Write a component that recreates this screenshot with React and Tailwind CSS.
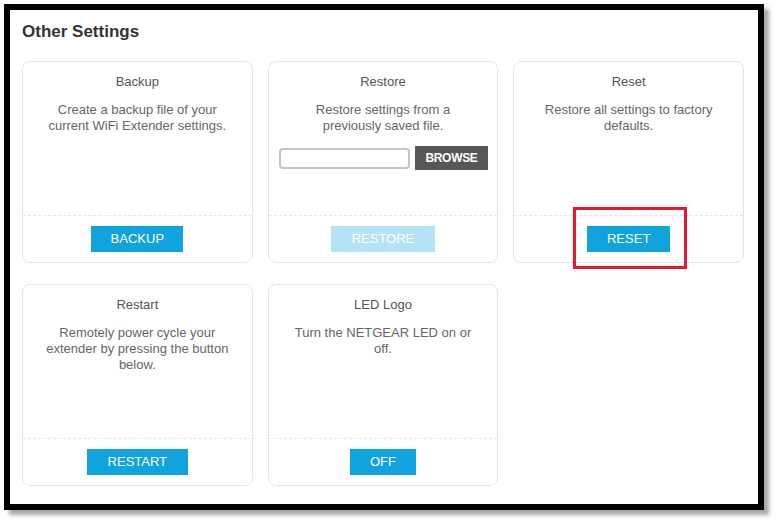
import React from 'react';

const cards = [
  { title: 'Backup', text: ['Create a backup file of your', 'current WiFi Extender settings.'], button: 'BACKUP', w: 'w-[92px]' },
  { title: 'Restore', text: ['Restore settings from a', 'previously saved file.'], button: 'RESTORE', w: 'w-[104px]', disabled: true, file: true },
  { title: 'Reset', text: ['Restore all settings to factory', 'defaults.'], button: 'RESET', w: 'w-[83px]', highlight: true },
  { title: 'Restart', text: ['Remotely power cycle your', 'extender by pressing the button', 'below.'], button: 'RESTART', w: 'w-[101px]' },
  { title: 'LED Logo', text: ['Turn the NETGEAR LED on or', 'off.'], button: 'OFF', w: 'w-[66px]' },
];

const Card = ({ card }) => (
  <div className="h-[202px] rounded-lg border border-[#e6e6e6] flex flex-col">
    <div className="h-[153px] shrink-0 flex flex-col items-center pt-[12px]">
      <h3 className="text-[13px] leading-[16px] text-[#555]">{card.title}</h3>
      <p className="mt-[12px] text-[13px] leading-[16px] text-[#666] text-center">
        {card.text.map((line) => (
          <span key={line} className="block">{line}</span>
        ))}
      </p>
      {card.file && (
        <div className="mt-[12px] flex items-center gap-[5px] pl-[1px]">
          <div className="w-[131px] h-[21px] rounded-[4px] border-2 border-[#c8c4c4] bg-white"></div>
          <button className="w-[73px] h-[24px] bg-[#575757] text-white text-[12px] font-bold tracking-tight">
            BROWSE
          </button>
        </div>
      )}
    </div>
    <div className="border-t border-dashed border-[#e6e6e6] flex-1 flex items-center justify-center">
      <div className="relative">
        <button
          className={`${card.w} h-[26px] text-[13px] text-white ${card.disabled ? 'bg-[#b4e3f6]' : 'bg-[#10a3dd]'}`}
        >
          {card.button}
        </button>
        {card.highlight && (
          <div className="absolute left-[-14px] top-[-19px] w-[114px] h-[62px] border-[3px] border-[#e8192c]"></div>
        )}
      </div>
    </div>
  </div>
);

export default function App() {
  return (
    <div className="w-[777px] h-[524px] bg-white p-[4px]" style={{ fontFamily: '"Liberation Sans", Arial, sans-serif' }}>
      <div className="w-[760px] h-[506px] border-[6px] border-black bg-white shadow-[5px_5px_4px_rgba(0,0,0,0.35)] pl-[12px] pr-[14px] pt-[11px]">
        <h2 className="text-[17px] leading-[22px] font-bold text-[#333]">Other Settings</h2>
        <div className="mt-[18px] grid grid-cols-3 gap-x-[15px] gap-y-[21px]">
          {cards.map((card) => (
            <Card key={card.title} card={card} />
          ))}
        </div>
      </div>
    </div>
  );
}
